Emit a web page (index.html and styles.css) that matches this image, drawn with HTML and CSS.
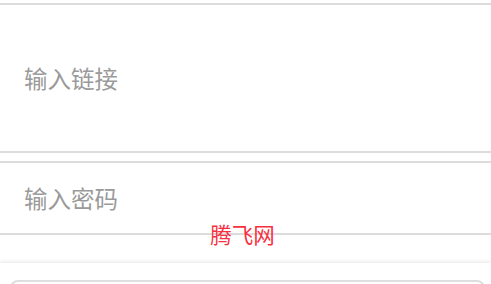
FILE: index.html
```html
<!DOCTYPE html>
<html>
<head>
<meta charset="utf-8">
<link rel="stylesheet" href="styles.css">
</head>
<body>
<div class="page">
  <div class="field field-link">
    <textarea class="input area" placeholder="输入链接"></textarea>
  </div>
  <div class="field field-pass">
    <input class="input line" type="text" placeholder="输入密码">
  </div>
  <div class="watermark">腾飞网</div>
  <div class="footer">
    <div class="btn"></div>
  </div>
</div>
</body>
</html>
```
FILE: styles.css
```css
html, body {
  margin: 0;
  padding: 0;
  background: #fff;
  height: 100%;
  overflow: hidden;
}
.page {
  position: relative;
  padding-top: 3px;
  font-family: "Noto Sans CJK SC", "Noto Sans", sans-serif;
}
.field {
  border-top: 2px solid #dcdcdc;
  border-bottom: 2px solid #dcdcdc;
  display: flex;
  align-items: center;
  box-sizing: border-box;
}
.field-link {
  height: 150px;
}
.field-pass {
  margin-top: 8px;
  height: 74px;
}
.input {
  border: none;
  outline: none;
  background: transparent;
  width: 100%;
  padding: 0 0 0 24px;
  margin: 0;
  font-family: "Noto Sans CJK SC", "Noto Sans", sans-serif;
  font-size: 23.5px;
  color: #333;
  resize: none;
}
.area {
  height: 34px;
  line-height: 34px;
  overflow: hidden;
}
.line {
  height: 34px;
  line-height: 34px;
  box-sizing: border-box;
}
.input::placeholder {
  color: #9a9a9a;
}
.watermark {
  position: absolute;
  left: 0;
  right: 6px;
  top: 218px;
  text-align: center;
  font-size: 21.5px;
  line-height: 32px;
  color: #f7303f;
}
.footer {
  margin-top: 28px;
  height: 20px;
  box-shadow: 0 -2px 3px rgba(0, 0, 0, 0.07);
  padding: 17px 6px 0 10px;
}
.btn {
  height: 40px;
  border: 2px solid #dedede;
  border-radius: 8px;
}
```
